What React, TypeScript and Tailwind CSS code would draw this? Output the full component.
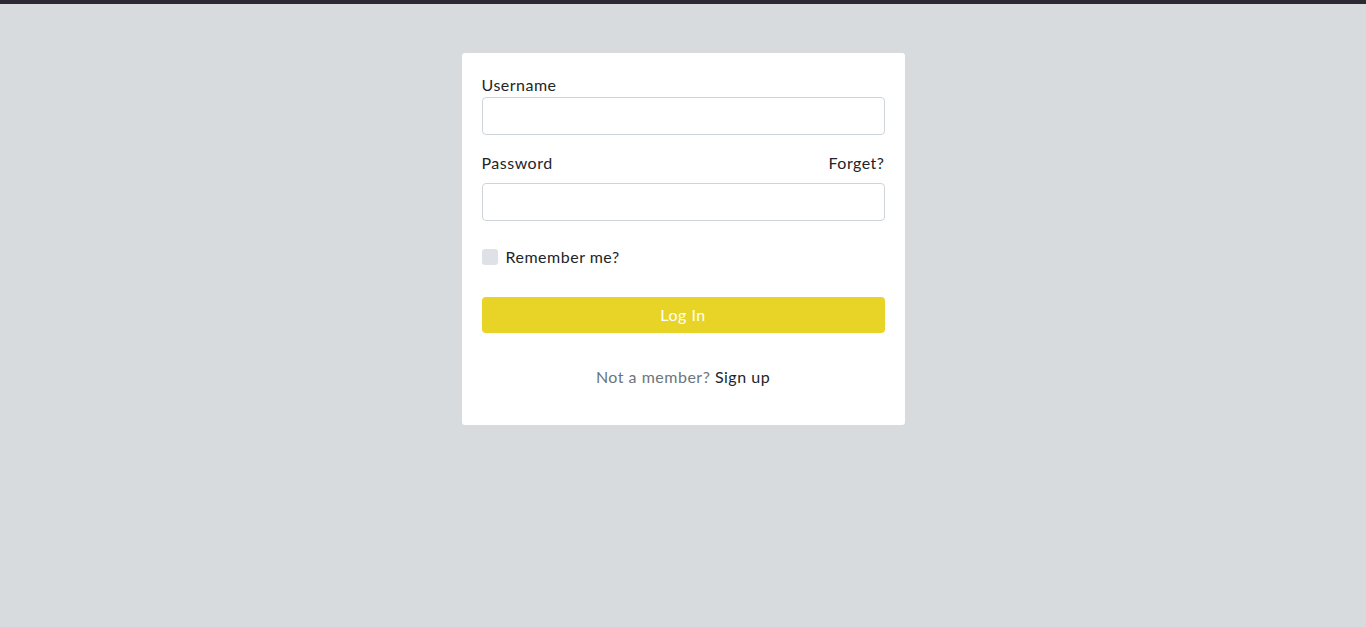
import React from 'react';

export default function App() {
  return (
    <div className="min-h-[627px] bg-[#d7dbde] font-['Lato','Noto_Sans',sans-serif] text-[16px] tracking-[0.5px] text-[#212529]">
      <div className="h-[4px] bg-[#2b2a33]" />
      <div className="flex justify-center pt-[49px]">
        <form className="w-[443px] rounded-[3px] bg-white px-[20px] pt-[20px] pb-[36px]">
          <label className="block leading-[24px]">Username</label>
          <input
            type="text"
            className="block h-[38px] w-full rounded-[4px] border border-[#ced4da] bg-white px-3 outline-none"
          />
          <div className="mt-[16px] flex items-center justify-between leading-[24px]">
            <label>Password</label>
            <a className="text-[#212529]">Forget?</a>
          </div>
          <input
            type="password"
            className="mt-[8px] block h-[38px] w-full rounded-[4px] border border-[#ced4da] bg-white px-3 outline-none"
          />
          <div className="mt-[24px] flex items-center gap-[8px] leading-[24px]">
            <span className="block h-[16px] w-[16px] rounded-[3px] bg-[#dee2e6]" />
            <span>Remember me?</span>
          </div>
          <button
            type="button"
            className="mt-[28px] block h-[36px] w-full rounded-[4px] bg-[#e8d427] text-white leading-[24px] tracking-[0.5px]"
          >
            Log In
          </button>
          <p className="mt-[32px] text-center leading-[24px]">
            <span className="text-[#6c757d]">Not a member?</span>{' '}
            <a className="text-[#212529]">Sign up</a>
          </p>
        </form>
      </div>
    </div>
  );
}
